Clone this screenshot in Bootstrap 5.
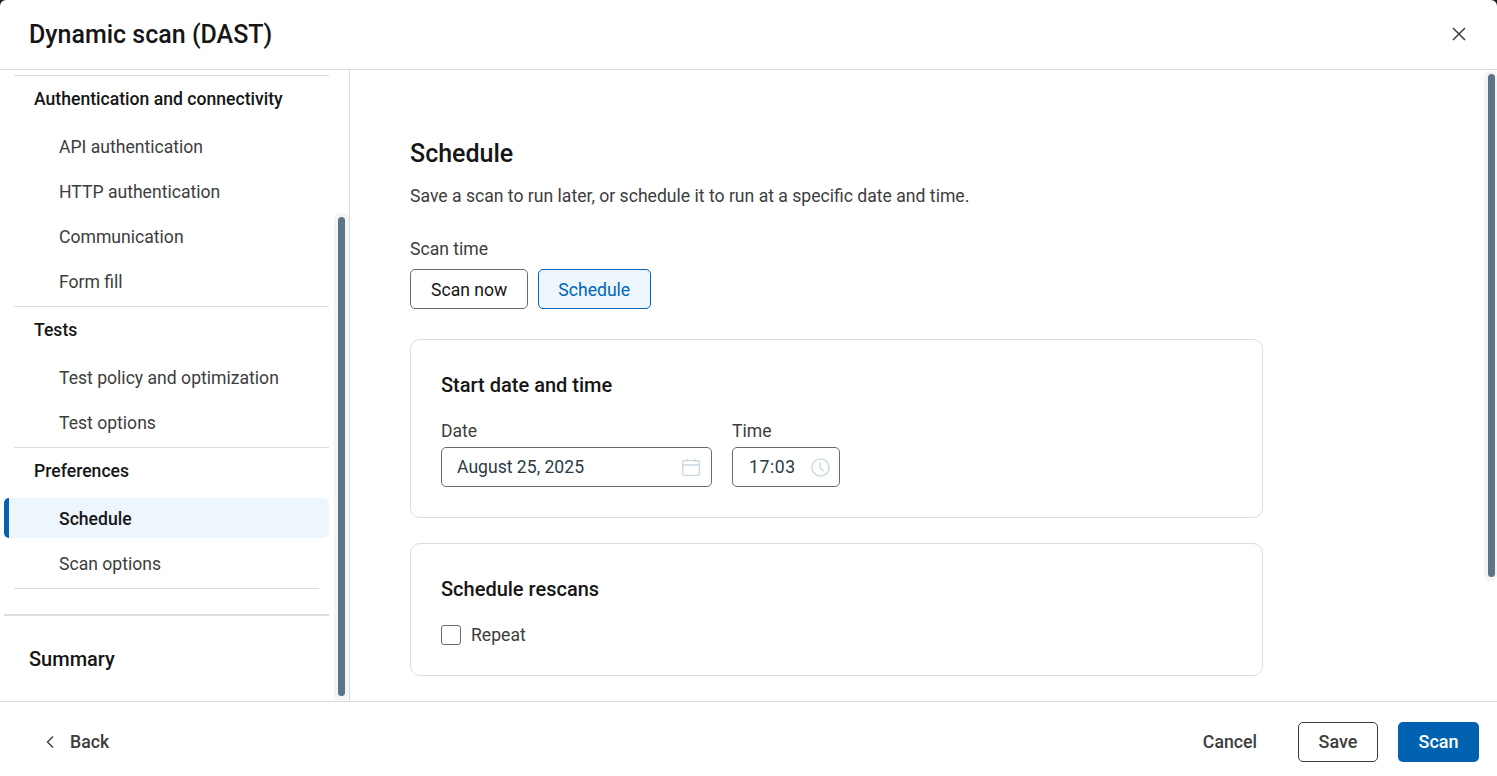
<!DOCTYPE html>
<html lang="en">
<head>
<meta charset="utf-8">
<title>Dynamic scan (DAST)</title>
<link href="https://cdn.jsdelivr.net/npm/bootstrap@5.3.0/dist/css/bootstrap.min.css" rel="stylesheet">
<style>
html, body { height: 100%; overflow: hidden; }
body { font-family: Roboto, "Liberation Sans", sans-serif; background: #1c1c1c; color: #161616; }
.shell { height: 776px; background: #fff; border-radius: 6px 6px 0 0; }
.top-bar { height: 70px; padding: 0 31px 2px 29px; border-bottom: 1px solid #dcdcdc; flex: none; }
.top-bar h1 { font-size: 25px; line-height: 30px; font-weight: 500; margin: 2px 0 0; color: #161616; }
.plain-btn { background: none; border: 0; padding: 0; line-height: 0; color: #333; }
.mid-area { height: 631px; flex: none; overflow: hidden; }
.side-pane { width: 350px; flex: none; border-right: 1px solid #dcdcdc; padding: 5px 0 0 4px; position: relative; }
.nav-group { width: 315px; margin-left: 10px; border-top: 1px solid #dcdcdc; }
.group-title { font-size: 17.6px; font-weight: 500; line-height: 24px; padding: 11px 20px 0; margin: 0 0 16px; color: #161616; }
.group-title-tight { margin-bottom: 15px; }
.nav-entry { display: block; height: 40px; margin-top: 5px; padding-left: 45px; line-height: 40px; font-size: 17.6px; color: #3d3d3d; text-decoration: none; }
.nav-entry-on { margin: 0 0 6px -10px; padding-left: 55px; width: 325px; line-height: 42px; background: #edf5fd; border-radius: 6px; font-weight: 500; color: #161616; position: relative; }
.nav-entry-on::before { content: ""; position: absolute; left: 0; top: 0; bottom: 0; width: 5px; background: #0062b1; border-radius: 6px 0 0 6px; }
.nav-end { width: 305px; margin: 0 0 0 10px; border-top: 1px solid #dcdcdc; height: 26px; }
.nav-sum { width: 325px; border-top: 2px solid #dcdcdc; padding: 30px 25px 0; font-size: 20px; line-height: 26px; font-weight: 500; color: #161616; }
.track { position: absolute; background: #f4f4f4; border-radius: 6px; }
.thumb { position: absolute; background: #5a7489; border-radius: 4px; }
.side-track { right: 0; top: 143px; width: 15px; height: 488px; }
.side-thumb { right: 4px; top: 147px; width: 7px; height: 479px; }
.main-track { right: 0; top: 1px; width: 13px; height: 510px; }
.main-thumb { right: 2px; top: 4px; width: 7px; height: 503px; }
.main-pane { position: relative; padding: 67px 0 0 60px; }
.main-inner { width: 853px; }
.page-head { font-size: 25px; line-height: 34px; font-weight: 500; margin: 0 0 12px; color: #161616; }
.page-sub { font-size: 17.6px; line-height: 26px; margin: 0 0 28px; color: #3d3d3d; }
.f-label { font-size: 17.6px; line-height: 24px; color: #3d3d3d; margin: 0 0 8px; display: block; }
.f-label-tight { margin-bottom: 4px; }
.f-label-check { margin: 0 0 0 2px; }
.choice-row { gap: 10px; }
.choice { height: 40px; font-size: 17.6px; line-height: 24px; border-radius: 5px; padding: 2px 20px 0; border: 1px solid #6b6b6b; color: #161616; background: #fff; }
.choice-on { padding-left: 19px; padding-right: 20px; background: #edf5fd; border-color: #0066b5; color: #0066b5; }
.box { border: 1px solid #dcdcdc; border-radius: 10px; padding: 30px; }
.box-a { height: 179px; margin-top: 30px; }
.box-b { height: 133px; margin-top: 25px; }
.box h2 { font-size: 20px; line-height: 30px; font-weight: 500; margin: 0 0 19px; color: #161616; }
.field-row { gap: 20px; }
.field { height: 40px; border: 1px solid #6b6b6b; border-radius: 5px; padding: 0 11px 0 15px; font-size: 17.6px; color: #2b3a47; }
.field-date { width: 271px; }
.field-time { width: 108px; padding-left: 16px; padding-right: 9.5px; letter-spacing: .6px; }
.tick { width: 20px; height: 20px; border: 1px solid #6b6b6b; border-radius: 3px; flex: none; }
.bottom-bar { height: 75px; flex: none; border-top: 1px solid #dcdcdc; padding: 6px 18px 0 45px; }
.act { height: 40px; font-size: 18px; font-weight: 500; border-radius: 5px; padding: 0 0 2px; }
.act-text { font-size: 17.7px; color: #3d3d3d; background: none; border: 0; padding-bottom: 0; }
.act-save { width: 80px; border: 1px solid #3d3d3d; color: #3d3d3d; background: #fff; margin-left: 41px; }
.act-go { width: 81px; border: 0; background: #0062b1; color: #fff; margin-left: 20px; }
</style>
</head>
<body>
<div class="shell d-flex flex-column">
  <header class="top-bar d-flex align-items-center justify-content-between">
    <h1>Dynamic scan (DAST)</h1>
    <button class="plain-btn d-flex" aria-label="Close" type="button">
      <svg width="14" height="14" viewBox="0 0 14 14" fill="none" stroke="#3d3d3d" stroke-width="1.5"><path d="M1 1l12 12M13 1L1 13"/></svg>
    </button>
  </header>
  <div class="mid-area d-flex">
    <aside class="side-pane">
      <div class="nav-group">
        <p class="group-title">Authentication and connectivity</p>
        <a class="nav-entry" href="#">API authentication</a>
        <a class="nav-entry" href="#">HTTP authentication</a>
        <a class="nav-entry" href="#">Communication</a>
        <a class="nav-entry" href="#">Form fill</a>
      </div>
      <div class="nav-group mt-1">
        <p class="group-title">Tests</p>
        <a class="nav-entry" href="#">Test policy and optimization</a>
        <a class="nav-entry" href="#">Test options</a>
      </div>
      <div class="nav-group mt-1">
        <p class="group-title group-title-tight">Preferences</p>
        <a class="nav-entry nav-entry-on" href="#">Schedule</a>
        <a class="nav-entry" href="#">Scan options</a>
      </div>
      <div class="nav-group mt-1 nav-end"></div>
      <div class="nav-sum">Summary</div>
      <div class="track side-track"></div>
      <div class="thumb side-thumb"></div>
    </aside>
    <main class="main-pane flex-grow-1">
      <div class="main-inner">
        <h2 class="page-head">Schedule</h2>
        <p class="page-sub">Save a scan to run later, or schedule it to run at a specific date and time.</p>
        <span class="f-label">Scan time</span>
        <div class="d-flex choice-row">
          <button type="button" class="choice">Scan now</button>
          <button type="button" class="choice choice-on">Schedule</button>
        </div>
        <section class="box box-a">
          <h2>Start date and time</h2>
          <div class="d-flex field-row">
            <div>
              <span class="f-label f-label-tight">Date</span>
              <div class="field field-date d-flex align-items-center justify-content-between">
                <span>August 25, 2025</span>
                <svg width="18" height="18" viewBox="0 0 18 18" fill="none" stroke="#c9d6e0" stroke-width="1.3"><rect x=".7" y="2.7" width="16.6" height="14.6" rx="1"/><path d="M.7 7h16.6M5 .5v3M13 .5v3"/></svg>
              </div>
            </div>
            <div>
              <span class="f-label f-label-tight">Time</span>
              <div class="field field-time d-flex align-items-center justify-content-between">
                <span>17:03</span>
                <svg width="19" height="19" viewBox="0 0 19 19" fill="none" stroke="#c9d6e0" stroke-width="1.4"><circle cx="9.5" cy="9.5" r="8.6"/><path d="M9 4.5v5.2l3.6 3.6"/></svg>
              </div>
            </div>
          </div>
        </section>
        <section class="box box-b">
          <h2>Schedule rescans</h2>
          <div class="d-flex align-items-center gap-2">
            <span class="tick"></span>
            <span class="f-label f-label-check">Repeat</span>
          </div>
        </section>
      </div>
      <div class="track main-track"></div>
      <div class="thumb main-thumb"></div>
    </main>
  </div>
  <footer class="bottom-bar d-flex align-items-center">
    <button class="plain-btn d-flex align-items-center" type="button" aria-label="Back">
      <svg width="9" height="14" viewBox="0 0 9 14" fill="none" stroke="#3d3d3d" stroke-width="1.4"><path d="M8 1.5L2.5 7 8 12.5"/></svg>
    </button>
    <button type="button" class="act act-text ms-3">Back</button>
    <button type="button" class="act act-text ms-auto">Cancel</button>
    <button type="button" class="act act-save">Save</button>
    <button type="button" class="act act-go">Scan</button>
  </footer>
</div>
<script src="https://cdn.jsdelivr.net/npm/bootstrap@5.3.0/dist/js/bootstrap.bundle.min.js"></script>
</body>
</html>
